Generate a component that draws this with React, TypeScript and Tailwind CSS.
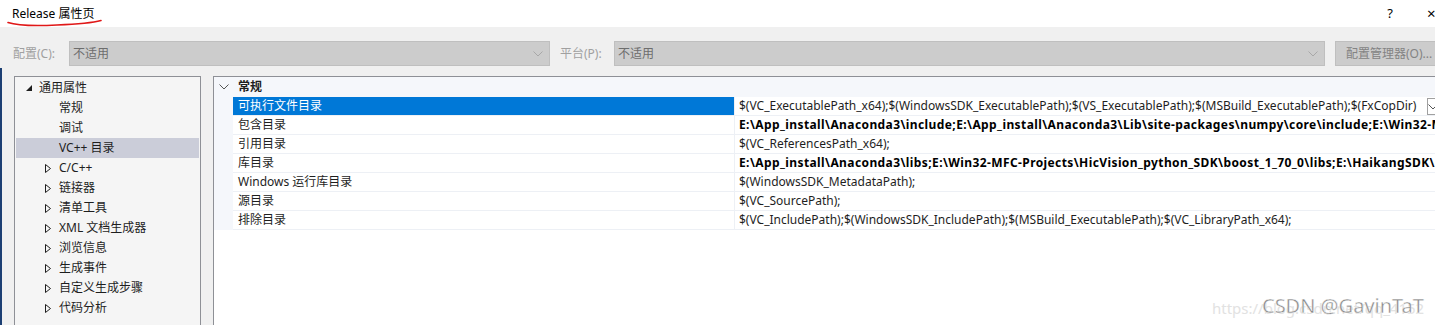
import React from "react";

const FONT = { fontFamily: '"Noto Sans", "Noto Sans CJK SC", sans-serif' };

const treeItems: { label: string; level: 0 | 1; icon?: "open" | "closed"; selected?: boolean }[] = [
  { label: "通用属性", level: 0, icon: "open" },
  { label: "常规", level: 1 },
  { label: "调试", level: 1 },
  { label: "VC++ 目录", level: 1, selected: true },
  { label: "C/C++", level: 1, icon: "closed" },
  { label: "链接器", level: 1, icon: "closed" },
  { label: "清单工具", level: 1, icon: "closed" },
  { label: "XML 文档生成器", level: 1, icon: "closed" },
  { label: "浏览信息", level: 1, icon: "closed" },
  { label: "生成事件", level: 1, icon: "closed" },
  { label: "自定义生成步骤", level: 1, icon: "closed" },
  { label: "代码分析", level: 1, icon: "closed" },
];

const rows: { name: string; value: string; bold?: boolean; selected?: boolean }[] = [
  {
    name: "可执行文件目录",
    value:
      "$(VC_ExecutablePath_x64);$(WindowsSDK_ExecutablePath);$(VS_ExecutablePath);$(MSBuild_ExecutablePath);$(FxCopDir)",
    selected: true,
  },
  {
    name: "包含目录",
    value:
      "E:\\App_install\\Anaconda3\\include;E:\\App_install\\Anaconda3\\Lib\\site-packages\\numpy\\core\\include;E:\\Win32-MFC-Projects\\HicVision_python_SDK\\include;",
    bold: true,
  },
  { name: "引用目录", value: "$(VC_ReferencesPath_x64);" },
  {
    name: "库目录",
    value:
      "E:\\App_install\\Anaconda3\\libs;E:\\Win32-MFC-Projects\\HicVision_python_SDK\\boost_1_70_0\\libs;E:\\HaikangSDK\\CH-HCNetSDKV6;",
    bold: true,
  },
  { name: "Windows 运行库目录", value: "$(WindowsSDK_MetadataPath);" },
  { name: "源目录", value: "$(VC_SourcePath);" },
  {
    name: "排除目录",
    value:
      "$(VC_IncludePath);$(WindowsSDK_IncludePath);$(MSBuild_ExecutablePath);$(VC_LibraryPath_x64);",
  },
];

function Chevron({ color = "#9a9a9a" }: { color?: string }) {
  return (
    <svg width="10" height="6" viewBox="0 0 10 6">
      <path d="M0.5 0.5 L5 5 L9.5 0.5" fill="none" stroke={color} strokeWidth="1" />
    </svg>
  );
}

function Combo({ width }: { width: string }) {
  return (
    <div
      className={`${width} shrink-0 h-[25px] bg-[#cccccc] border border-[#bfbfbf] flex items-center justify-between pl-[3px] pr-[6px] text-[12px] text-[#6d6d6d]`}
    >
      <span>不适用</span>
      <Chevron color="#a8a8a8" />
    </div>
  );
}

export default function App() {
  return (
    <div
      className="relative w-[1435px] h-[325px] overflow-hidden bg-[#f0f0f0] text-[12px] text-[#1e1e1e]"
      style={FONT}
    >
      {/* Title bar */}
      <div className="relative h-[27px] bg-white flex items-center justify-between">
        <span className="pl-[12px] pt-[1px] text-[12px] text-black">Release 属性页</span>
        <div className="flex items-center gap-[34px]">
          <span className="text-[13px] text-black">?</span>
          <span className="text-[15px] text-black w-[8px] overflow-hidden">×</span>
        </div>
        <svg className="absolute left-[7px] top-[19px]" width="96" height="8" viewBox="0 0 96 8">
          <path
            d="M1 3.5 C 10 6.5, 30 7, 50 6 C 70 5.2, 85 4, 94 1.5"
            fill="none"
            stroke="#e01818"
            strokeWidth="1.6"
            strokeLinecap="round"
          />
        </svg>
      </div>

      {/* Left blue window edge */}
      <div className="absolute left-0 top-[68px] w-[2px] h-[260px] bg-[#1c3f73]" />

      {/* Config row */}
      <div className="flex items-center h-[25px] mt-[14px] pl-[13px]">
        <span className="w-[56px] shrink-0 text-[#a0a0a0]">配置(C):</span>
        <Combo width="w-[481px]" />
        <span className="ml-[10px] w-[54px] shrink-0 text-[#a0a0a0]">平台(P):</span>
        <Combo width="w-[711px]" />
        <div className="ml-[10px] shrink-0 w-[120px] h-[25px] bg-[#cccccc] border border-[#bfbfbf] flex items-center pl-[10px] text-[#838383] whitespace-nowrap">
          配置管理器(O)...
        </div>
      </div>

      {/* Main */}
      <div className="flex mt-[10px] pl-[14px] gap-[12px]">
        {/* Tree */}
        <div className="w-[187px] h-[260px] shrink-0 border border-[#8e9096] bg-[#f5f5f5] pt-[1px] px-[1px]">
          {treeItems.map((it) => (
            <div
              key={it.label}
              className={`h-[20px] flex items-center ${it.selected ? "bg-[#cbcdd9]" : ""}`}
            >
              <div className={`${it.level === 0 ? "w-[23px]" : "w-[42px]"} flex justify-end pr-[7px]`}>
                {it.icon === "open" && (
                  <svg width="6" height="6" viewBox="0 0 6 6">
                    <path d="M6 0 L6 6 L0 6 Z" fill="#1e1e1e" />
                  </svg>
                )}
                {it.icon === "closed" && (
                  <svg width="6" height="9" viewBox="0 0 6 9">
                    <path d="M0.5 0.5 L5.5 4.5 L0.5 8.5 Z" fill="none" stroke="#1e1e1e" strokeWidth="1" />
                  </svg>
                )}
              </div>
              <span className={it.level === 0 ? "" : "pl-[1px]"}>{it.label}</span>
            </div>
          ))}
        </div>

        {/* Property grid */}
        <div className="w-[1240px] h-[260px] shrink-0 border border-[#8e9096] bg-white">
          <div className="h-[20px] bg-[#f5f7fb] flex items-center">
            <div className="w-[19px] flex justify-center pl-[1px]">
              <Chevron color="#555" />
            </div>
            <span className="font-bold pl-[5px]">常规</span>
          </div>
          <div className="flex">
            <div className="w-[19px] bg-[#f5f7fb] shrink-0" />
            <div className="flex-1">
              {rows.map((r) => (
                <div key={r.name} className="h-[19px] flex border-b border-[#edf0f5]">
                  <div
                    className={`w-[501px] shrink-0 pl-[5px] flex items-center ${
                      r.selected ? "bg-[#0078d7] text-white" : ""
                    }`}
                  >
                    {r.name}
                  </div>
                  <div className="w-[1px] bg-[#edf0f5]" />
                  <div className="flex-1 relative overflow-hidden flex items-center pl-[4px]">
                    <span
                      className={`whitespace-nowrap ${
                        r.bold ? "font-bold text-black tracking-[0.4px]" : ""
                      }`}
                    >
                      {r.value}
                    </span>
                    {r.selected && (
                      <div className="absolute left-[692px] top-[1px] w-[12px] h-[17px] bg-white border border-[#a0a0a0] flex items-center justify-center">
                        <Chevron color="#555" />
                      </div>
                    )}
                  </div>
                </div>
              ))}
            </div>
          </div>
        </div>
      </div>

      {/* Watermark */}
      <div className="absolute left-[1212px] top-[297px] text-[15px] text-[#e2e2e2] whitespace-nowrap">
        https://blog.csdn.net/qq_4152
      </div>
      <div
        className="absolute left-[1262px] top-[291px] text-[20px] text-[#8a8a8a] whitespace-nowrap"
        style={{ WebkitTextStroke: "0.4px #ffffff" }}
      >
        CSDN @GavinTaT
      </div>
    </div>
  );
}
